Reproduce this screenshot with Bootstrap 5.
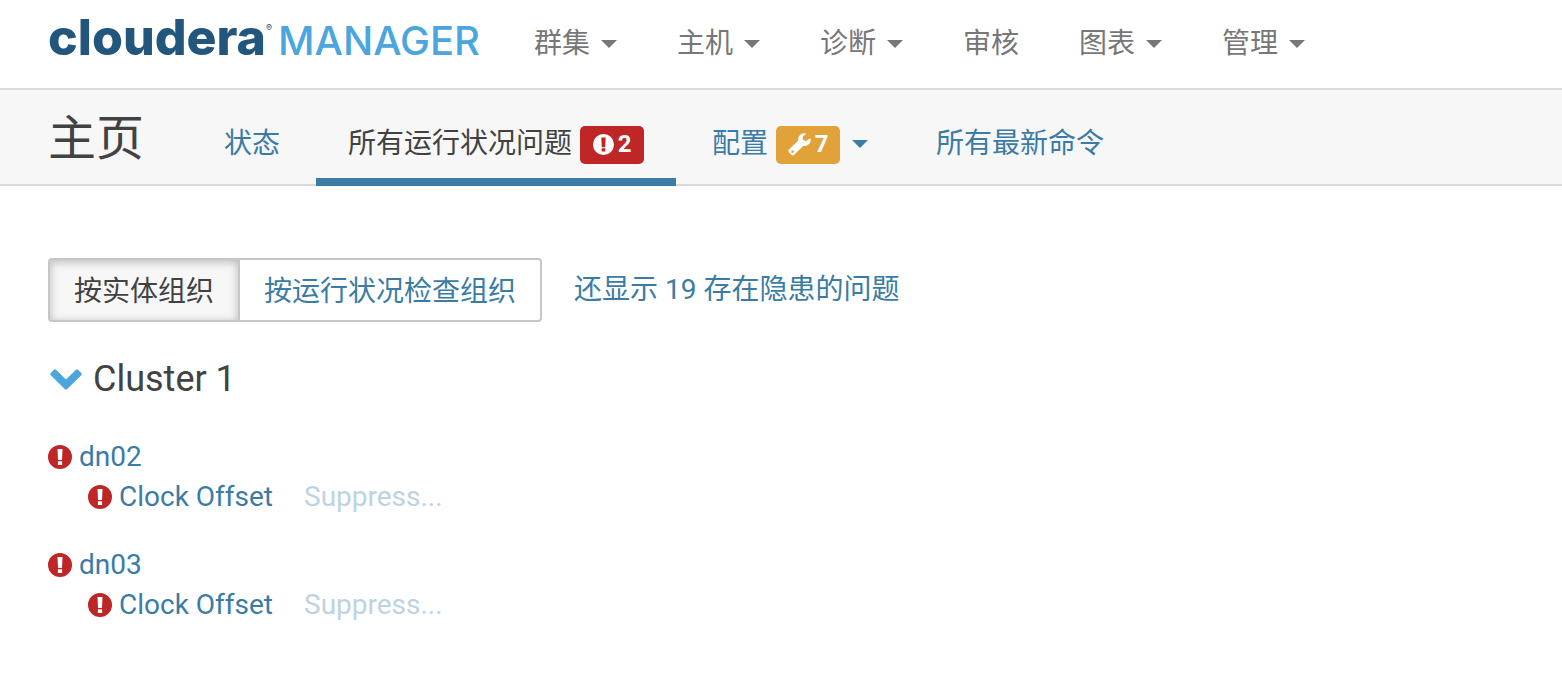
<!DOCTYPE html>
<html lang="zh-CN">
<head>
<meta charset="utf-8">
<meta name="viewport" content="width=device-width, initial-scale=1">
<title>主页 - Cloudera Manager</title>
<link href="https://cdn.jsdelivr.net/npm/bootstrap@5.3.0/dist/css/bootstrap.min.css" rel="stylesheet">
<style>
  :root { --cm-link: #3a7ca5; --cm-text: #424242; --cm-red: #bf2626; --cm-line: #dadada; }
  body { font-family: Roboto, "Noto Sans CJK SC", sans-serif; font-size: 28px; line-height: 40px; color: var(--cm-text); }
  a { color: var(--cm-link); text-decoration: none; }
  a:hover { text-decoration: underline; }
  svg { display: block; flex: none; }
  .topbar { height: 90px; padding: 0 48px; border-bottom: 2px solid var(--cm-line); }
  .brand { color: #23567d; font-family: Inter, sans-serif; line-height: 60px; margin-right: 24px; padding-bottom: 11px; }
  .brand-name { font-size: 50px; font-weight: 800; }
  .brand-reg { font-size: 9px; line-height: 10px; margin: 16px 6px 0 0; }
  .brand-product { font-size: 40px; font-weight: 500; color: #4ba6dd; }
  .topbar .nav-link { padding: 0 30px; color: #777; }
  .tri { border: 8px solid transparent; border-top-color: currentColor; border-bottom: 0; margin-left: 11px; }
  .subbar { height: 96px; padding: 0 48px; background: #f7f7f7; border-bottom: 2px solid var(--cm-line); }
  .subbar h1 { font-size: 48px; line-height: 98px; margin: 0 48px 0 0; }
  .tabs { gap: 4px; height: 96px; }
  .tabs .nav-link { padding: 20px 32px 0; color: var(--cm-link); border-bottom: 8px solid transparent; border-radius: 0; }
  .tabs .nav-link.active { color: var(--cm-text); border-bottom-color: var(--cm-link); }
  .tabs .tri { margin-left: 12px; }
  .tag { width: 64px; height: 38px; margin: 2px 0 0 8px; padding-bottom: 2px; gap: 4px; border-radius: 5px; color: #fff; font-size: 24px; font-weight: 700; }
  .tag-bad { background: var(--cm-red); }
  .tag-config { background: #e0a239; }
  main { padding: 72px 48px; }
  .switcher .btn { --bs-btn-color: var(--cm-link); --bs-btn-bg: #fff; --bs-btn-border-color: #c6c6c6; --bs-btn-border-width: 2px; --bs-btn-border-radius: 4px;
    --bs-btn-active-color: var(--cm-text); --bs-btn-active-bg: #f7f7f7; --bs-btn-active-border-color: #c6c6c6;
    --bs-btn-font-size: 28px; --bs-btn-line-height: 40px; padding: 12px 24px 8px; }
  .switcher.btn-group > .btn:not(:first-child) { margin-left: -2px; }
  .switcher .btn.active { box-shadow: inset 0 2px 10px rgba(0,0,0,.25); }
  .group-title { font-size: 36px; line-height: 48px; gap: 10px; margin: 33px 0 34px; }
  .issue { margin-bottom: 28px; }
  .issue-row { gap: 7px; }
  .issue-check { padding-left: 40px; }
  .suppress { color: #bdd3e2; margin-left: 24px; }
</style>
</head>
<body>
<svg width="0" height="0" class="position-absolute" aria-hidden="true">
  <symbol id="alert" viewBox="0 0 24 24"><path fill="currentColor" fill-rule="evenodd" d="M12 0a12 12 0 1 1 0 24a12 12 0 0 1 0-24zM9.500 4l.5 11h4l.5-11zM9.900 16.200V20h4.200v-3.800z"/></symbol>
</svg>
<header class="topbar d-flex align-items-center">
  <a class="brand d-flex align-items-baseline" href="#"><span class="brand-name">cloudera</span><span class="brand-reg align-self-start">®</span><span class="brand-product">MANAGER</span></a>
  <nav class="nav flex-nowrap text-nowrap">
    <a class="nav-link d-flex align-items-center" href="#">群集<span class="tri"></span></a>
    <a class="nav-link d-flex align-items-center" href="#">主机<span class="tri"></span></a>
    <a class="nav-link d-flex align-items-center" href="#">诊断<span class="tri"></span></a>
    <a class="nav-link" href="#">审核</a>
    <a class="nav-link d-flex align-items-center" href="#">图表<span class="tri"></span></a>
    <a class="nav-link d-flex align-items-center" href="#">管理<span class="tri"></span></a>
  </nav>
</header>
<div class="subbar d-flex">
  <h1 class="fw-normal text-nowrap">主页</h1>
  <nav class="tabs nav flex-nowrap text-nowrap">
    <a class="nav-link d-flex align-items-center" href="#">状态</a>
    <a class="nav-link active d-flex align-items-center" href="#" aria-current="page">所有运行状况问题<span class="tag tag-bad d-flex align-items-center justify-content-center"><svg width="21" height="21"><use href="#alert"/></svg>2</span></a>
    <a class="nav-link d-flex align-items-center" href="#">配置<span class="tag tag-config d-flex align-items-center justify-content-center"><svg width="23" height="23" viewBox="0 0 23 23"><path fill="#fff" fill-rule="evenodd" d="M22.4 5.2c.5 1 .4 2.600-.2 4-1.200 2.700-4 4.100-6.800 3.600L6.200 21.800c-.8.800-2 .8-2.800 0L1 19.400c-.8-.8-.8-2 0-2.800l9.300-9.200C9.800 4.600 11.200 2 13.700.8c1.600-.7 3.300-.7 4.700 0L14.800 3.400v3l2.700 1.900zM4.600 17.200a1.300 1.300 0 1 0 .01 0z"/></svg>7</span><span class="tri"></span></a>
    <a class="nav-link d-flex align-items-center" href="#">所有最新命令</a>
  </nav>
</div>
<main>
  <div class="d-flex align-items-center">
    <div class="switcher btn-group" role="group" aria-label="组织方式">
      <button type="button" class="btn active" aria-pressed="true">按实体组织</button>
      <button type="button" class="btn" aria-pressed="false">按运行状况检查组织</button>
    </div>
    <a class="ms-4 ps-2" href="#">还显示 19 存在隐患的问题</a>
  </div>
  <h2 class="group-title d-flex align-items-center fw-normal">
    <svg width="35" height="24" viewBox="0 0 35 24"><path fill="#4ba6dd" d="M2.500 6.200 6 2.700Q7 2 8 2.700L18 12.600 28 2.700Q29 2 30 2.700L33.500 6.200Q34.300 7 33.500 8L19 22.300Q18 23.200 17 22.300L2.500 8Q1.700 7 2.500 6.200z"/></svg>Cluster 1
  </h2>
  <section class="issue">
    <div class="issue-row d-flex align-items-center"><svg width="24" height="24" color="#bf2626"><use href="#alert"/></svg><a href="#">dn02</a></div>
    <div class="issue-row issue-check d-flex align-items-center"><svg width="24" height="24" color="#bf2626"><use href="#alert"/></svg><a href="#">Clock Offset</a><a class="suppress" href="#">Suppress...</a></div>
  </section>
  <section class="issue">
    <div class="issue-row d-flex align-items-center"><svg width="24" height="24" color="#bf2626"><use href="#alert"/></svg><a href="#">dn03</a></div>
    <div class="issue-row issue-check d-flex align-items-center"><svg width="24" height="24" color="#bf2626"><use href="#alert"/></svg><a href="#">Clock Offset</a><a class="suppress" href="#">Suppress...</a></div>
  </section>
</main>
<script src="https://cdn.jsdelivr.net/npm/bootstrap@5.3.0/dist/js/bootstrap.bundle.min.js"></script>
</body>
</html>
